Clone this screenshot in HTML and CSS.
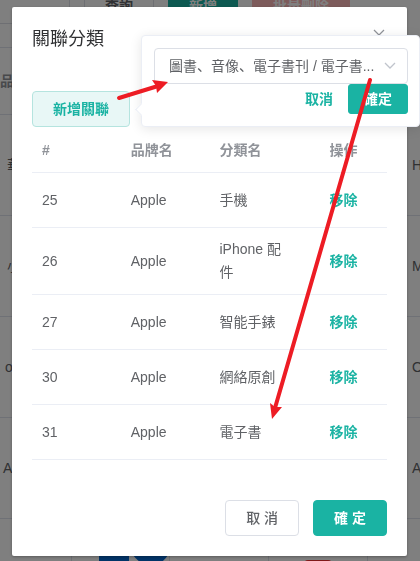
FILE: index.html
```html
<!DOCTYPE html>
<html lang="zh">
<head>
<meta charset="utf-8">
<meta name="viewport" content="width=device-width, initial-scale=1">
<title>關聯分類</title>
<link rel="stylesheet" href="styles.css">
</head>
<body>
<div class="page" inert>
  <div class="toolbar">
    <span class="field"></span>
    <button class="tool" type="button">查詢</button>
    <button class="tool tool-primary" type="button">新增</button>
    <button class="tool tool-danger" type="button">批量刪除</button>
  </div>
  <div class="grid">
    <div class="line line-head"><b class="first">品</b><i></i><i></i><i></i><span></span></div>
    <div class="line"><span class="first cjk">華</span><i></i><i></i><i></i><span class="last">H</span></div>
    <div class="line"><span class="first cjk">小</span><i></i><i></i><i></i><span class="last">M</span></div>
    <div class="line"><span class="first low">o</span><i></i><i></i><i></i><span class="last">O</span></div>
    <div class="line"><span class="first latin">A</span><i></i><i></i><i></i><span class="last">A</span></div>
    <div class="line">
      <span class="first"></span>
      <i><svg class="logo" viewBox="0 0 98 80" aria-hidden="true"><path d="M27 32h30v14H27zM61 32h35v4q-6 10-17 10t-18-10z" fill="#0368d0"/></svg></i>
      <i></i>
      <i><em class="tag"></em></i>
      <span></span>
    </div>
  </div>
</div>

<div class="overlay">
  <section class="dialog" role="dialog" aria-labelledby="dialog-title">
    <header class="dialog-header">
      <h1 id="dialog-title">關聯分類</h1>
      <button class="close" type="button" aria-label="關閉">
        <svg viewBox="0 0 16 16"><path d="M3 3l10 10M13 3L3 13" fill="none" stroke="#909399" stroke-width="1.2"/></svg>
      </button>
    </header>
    <button class="btn btn-plain" type="button">新增關聯</button>
    <table class="table">
      <colgroup><col class="col-id"><col class="col-brand"><col class="col-category"><col></colgroup>
      <thead>
        <tr><th>#</th><th>品牌名</th><th>分類名</th><th>操作</th></tr>
      </thead>
      <tbody>
        <tr><td>25</td><td>Apple</td><td class="category">手機</td><td><button class="link" type="button">移除</button></td></tr>
        <tr><td>26</td><td>Apple</td><td class="category">iPhone 配件</td><td><button class="link" type="button">移除</button></td></tr>
        <tr><td>27</td><td>Apple</td><td class="category">智能手錶</td><td><button class="link" type="button">移除</button></td></tr>
        <tr><td>30</td><td>Apple</td><td class="category">網絡原創</td><td><button class="link" type="button">移除</button></td></tr>
        <tr><td>31</td><td>Apple</td><td class="category">電子書</td><td><button class="link" type="button">移除</button></td></tr>
      </tbody>
    </table>
    <footer class="dialog-footer">
      <button class="btn" type="button">取 消</button>
      <button class="btn btn-primary" type="button">確 定</button>
    </footer>
  </section>
</div>

<div class="popover">
  <div class="cascader">
    <input type="text" readonly aria-label="分類" value="圖書、音像、電子書刊 / 電子書...">
    <svg viewBox="0 0 14 14" aria-hidden="true"><path d="M2 4l5 5 5-5" fill="none" stroke="#c0c4cc" stroke-width="1.3"/></svg>
  </div>
  <div class="popover-actions">
    <button class="link" type="button">取消</button>
    <button class="btn btn-primary btn-small" type="button">確定</button>
  </div>
</div>

<svg class="arrows" viewBox="0 0 420 561" aria-hidden="true">
  <g stroke="#ed1c24" fill="#ed1c24" stroke-linecap="round">
    <path d="M119 98L158 86" stroke-width="4"/>
    <path d="M168 82L152 80L156 86L157 93z" stroke="none"/>
    <path d="M370 80L275 408" stroke-width="4"/>
    <path d="M272 419L270 403L275 407L282 407z" stroke="none"/>
  </g>
</svg>
</body>
</html>
```

FILE: styles.css
```css
* {
  box-sizing: border-box;
}

body {
  margin: 0;
  background: #fff;
  color: #606266;
  font: 14px/23px "Liberation Sans", "Noto Sans CJK SC", sans-serif;
}

button,
input {
  font: inherit;
}

button {
  padding: 0;
  border: 0;
  background: none;
  color: inherit;
}

/* Page behind the dialog */
.page {
  height: 100vh;
  overflow: hidden;
}

.toolbar {
  display: flex;
  gap: 14px;
  height: 36px;
  margin-top: -12px;
}

.field {
  width: 70px;
  border: 1px solid #dcdfe6;
  border-left: 0;
}

.tool {
  width: 70px;
  border: 1px solid #dcdfe6;
  font-weight: 700;
}

.tool-primary {
  border-color: #1ab3a3;
  background: #1ab3a3;
  color: #fff;
}

.tool-danger {
  width: 98px;
  border-color: #fab6b6;
  background: #fab6b6;
  color: #fff;
}

.grid {
  margin-top: 23px;
  border-top: 1px solid #dfe3ec;
}

.line {
  display: grid;
  grid-template-columns: 72px 98px 99px 99px 1fr;
  height: 101px;
  border-bottom: 1px solid #dfe3ec;
  line-height: 100px;
}

.line-head {
  height: 67px;
  color: #909399;
  line-height: 66px;
}

.line > * {
  border-right: 1px solid #dfe3ec;
}

.line > :last-child {
  border-right: 0;
}

.cjk {
  padding-left: 7px;
}

.low {
  padding-left: 5px;
}

.latin {
  padding-left: 3px;
}

.last {
  padding-left: 44px;
}

.logo {
  display: block;
  width: 98px;
  height: 80px;
}

.tag {
  display: block;
  width: 28px;
  height: 20px;
  margin: 41px auto 0;
  border-radius: 4px;
  background: #f33;
}

/* Dialog */
.overlay {
  position: fixed;
  inset: 0;
  padding: 7px 13px 5px 12px;
  background: rgba(0, 0, 0, 0.5);
}

.dialog {
  padding: 20px;
  border-radius: 2px;
  background: #fff;
  box-shadow: 0 1px 3px rgba(0, 0, 0, 0.3);
}

.dialog-header {
  display: flex;
  justify-content: space-between;
  margin-bottom: 40px;
}

.dialog-header h1 {
  margin: 0;
  color: #303133;
  font-size: 18px;
  font-weight: 400;
  line-height: 24px;
}

.close {
  width: 16px;
  height: 16px;
}

.close svg {
  display: block;
}

.btn {
  height: 36px;
  padding: 0 20px;
  border: 1px solid #dcdfe6;
  border-radius: 4px;
  background: #fff;
  font-weight: 500;
  line-height: 20px;
}

.btn-plain {
  display: block;
  border-color: #b5e4df;
  background: #e8f7f6;
  color: #1ab3a3;
  font-weight: 700;
}

.btn-primary {
  border-color: #1ab3a3;
  background: #1ab3a3;
  color: #fff;
  font-weight: 700;
}

.btn-small {
  height: 30px;
  padding: 0 15px;
  border-radius: 3px;
}

.table {
  width: 100%;
  margin-top: 1px;
  border-spacing: 0;
  table-layout: fixed;
}

.col-id,
.col-brand {
  width: 25%;
}

.col-category {
  width: 31%;
}

.table th,
.table td {
  height: 55px;
  padding: 10px;
  border-bottom: 1px solid #ebeef5;
  text-align: left;
}

.table th {
  height: 45px;
  color: #909399;
  font-weight: 700;
}

.table .category {
  padding-right: 30px;
}

.link {
  color: #1ab3a3;
  font-weight: 700;
}

.dialog-footer {
  display: flex;
  justify-content: flex-end;
  gap: 14px;
  margin-top: 40px;
}

/* Popover next to the add button */
.popover {
  position: absolute;
  top: 35px;
  right: 0;
  left: 141px;
  padding: 12px 11px 12px 12px;
  border: 1px solid #ebeef5;
  border-radius: 4px;
  background: #fff;
  box-shadow: 0 2px 12px rgba(0, 0, 0, 0.1);
}

.popover::before {
  content: "";
  position: absolute;
  top: 69px;
  left: -5px;
  width: 8px;
  height: 8px;
  border: 1px solid #ebeef5;
  border-width: 0 0 1px 1px;
  background: #fff;
  transform: rotate(45deg);
}

.cascader {
  display: flex;
  align-items: center;
  height: 36px;
  padding: 0 10px 0 14px;
  border: 1px solid #dcdfe6;
  border-radius: 4px;
}

.cascader input {
  flex: 1;
  min-width: 0;
  padding: 0;
  border: 0;
  outline: 0;
  background: none;
  color: #606266;
}

.cascader svg {
  flex: none;
  width: 14px;
}

.popover-actions {
  display: flex;
  justify-content: flex-end;
  gap: 15px;
}

/* Annotation arrows */
.arrows {
  position: absolute;
  top: 0;
  left: 0;
  width: 420px;
  pointer-events: none;
}
```
